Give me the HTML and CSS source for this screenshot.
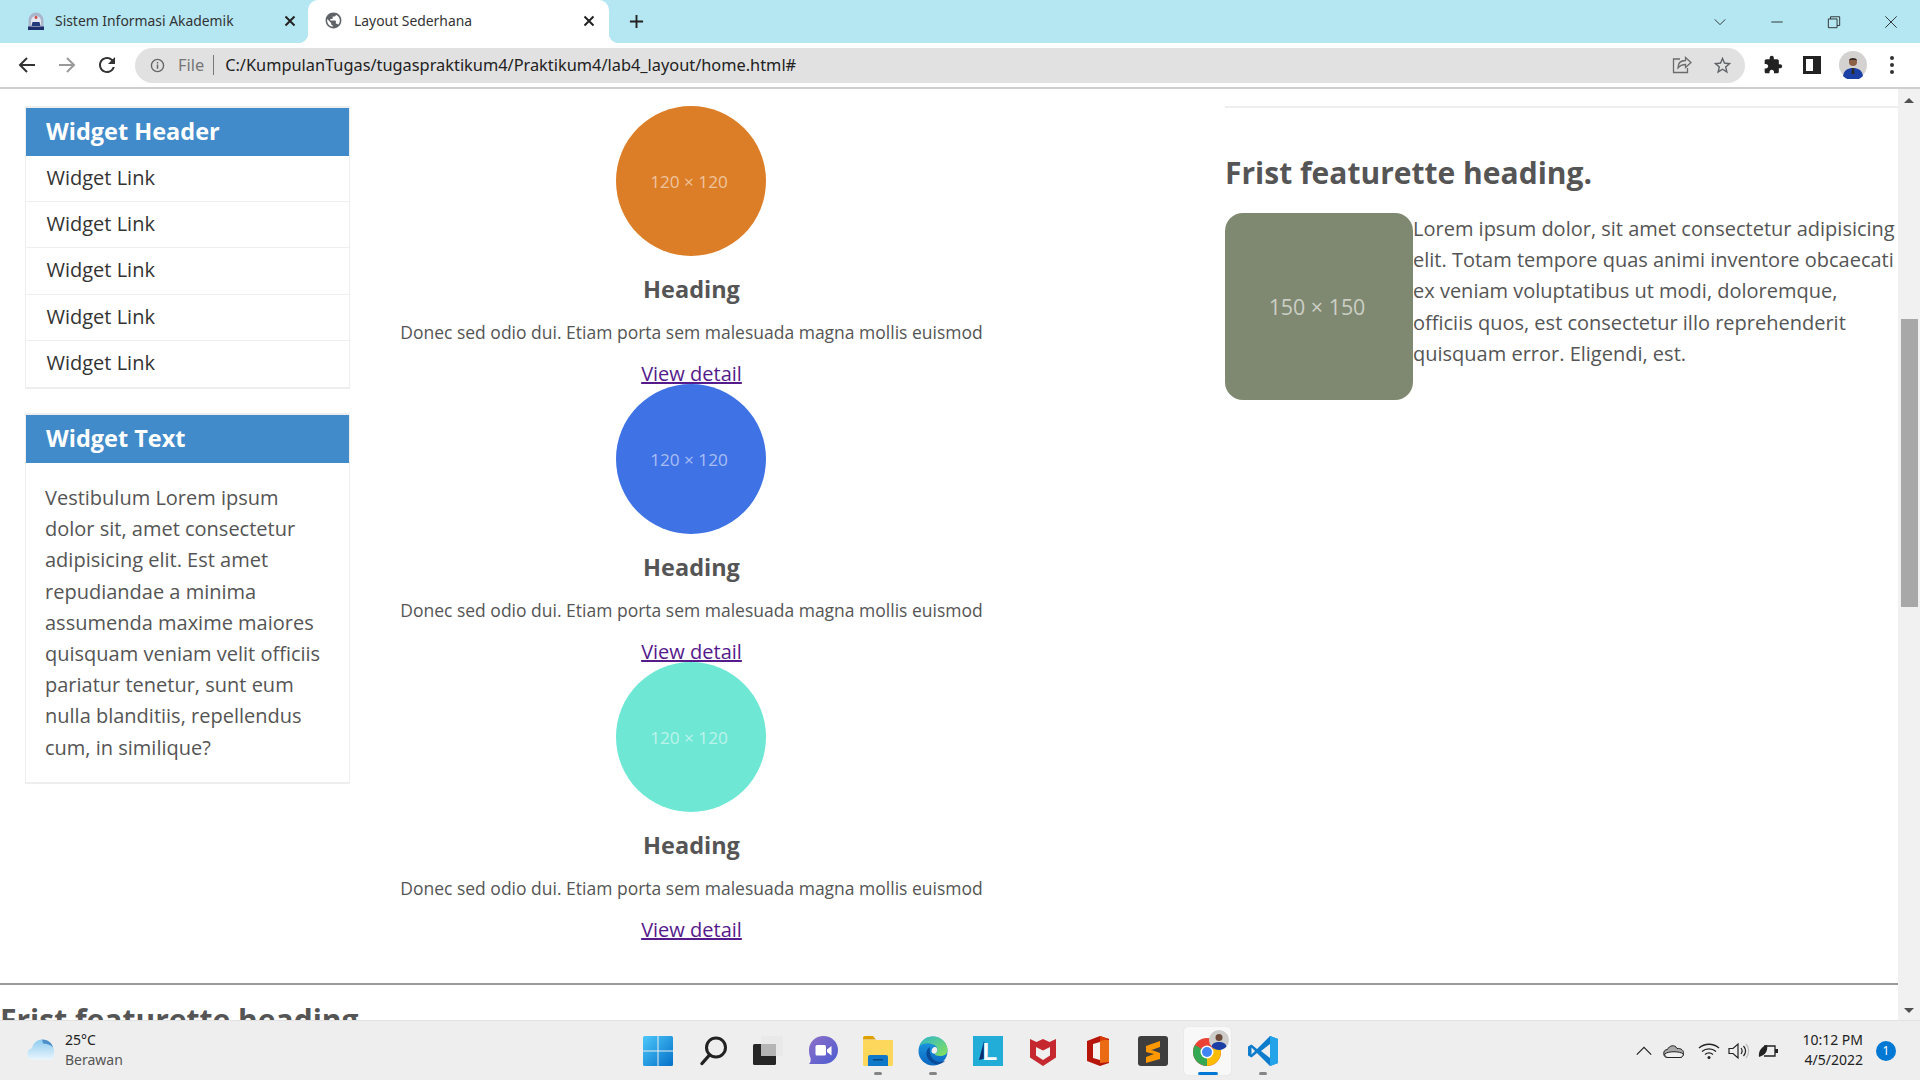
FILE: index.html
```html
<!DOCTYPE html>
<html lang="en">
<head>
  <meta charset="UTF-8">
  <title>Layout Sederhana</title>
  <link rel="stylesheet" href="styles.css">
</head>
<body>
  <!-- browser tabs -->
  <div class="tabstrip">
    <div class="tab">
      <svg class="favicon" viewBox="0 0 20 20"><path d="M2.500 17V9a7.500 7.500 0 0 1 15 0v8z" fill="#a9b6cc"/><path d="M5 17V10a5 5 0 0 1 10 0v7z" fill="#e3e7ef"/><circle cx="10" cy="6.500" r="1.400" fill="#c8483f"/><path d="M6.500 11h7l1 4h-9z" fill="#24397a"/><path d="M2 15.500h16V19H2z" fill="#1c2f6b"/></svg>
      <span class="tab-title">Sistem Informasi Akademik</span>
      <svg class="tab-close" viewBox="0 0 12 12"><path d="M1.500 1.500l9 9M10.500 1.500l-9 9"/></svg>
    </div>
    <div class="tab tab-active">
      <svg class="favicon" viewBox="0 0 24 24"><path fill="#5f6368" d="M12 2C6.480 2 2 6.480 2 12s4.480 10 10 10 10-4.480 10-10S17.520 2 12 2zm-1 17.930c-3.950-.49-7-3.850-7-7.930 0-.62.08-1.210.21-1.790L9 15v1c0 1.100.9 2 2 2v1.930zm6.900-2.540c-.26-.81-1-1.390-1.900-1.390h-1v-3c0-.55-.45-1-1-1H8v-2h2c.55 0 1-.45 1-1V7h2c1.100 0 2-.9 2-2v-.41c2.930 1.190 5 4.060 5 7.410 0 2.080-.8 3.970-2.100 5.390z"/></svg>
      <span class="tab-title">Layout Sederhana</span>
      <svg class="tab-close" viewBox="0 0 12 12"><path d="M1.500 1.500l9 9M10.500 1.500l-9 9"/></svg>
    </div>
    <svg class="new-tab" viewBox="0 0 16 16"><path d="M8 1v14M1 8h14"/></svg>
    <div class="window-controls">
      <svg class="win-btn" viewBox="0 0 16 16"><path d="M2 5l6 6 6-6"/></svg>
      <svg class="win-btn" viewBox="0 0 16 16"><path d="M1.500 8h13"/></svg>
      <svg class="win-btn" viewBox="0 0 16 16"><path d="M1.500 4.500h10v10h-10zM4 4.500V2h10.500v10h-3"/></svg>
      <svg class="win-btn" viewBox="0 0 16 16"><path d="M1.500 1.500l13 13M14.500 1.500l-13 13"/></svg>
    </div>
  </div>

  <!-- toolbar -->
  <div class="toolbar">
    <svg class="nav-icon" viewBox="0 0 24 24"><path d="M20 12H5M12 5l-7 7 7 7" fill="none" stroke="#333" stroke-width="2"/></svg>
    <svg class="nav-icon" viewBox="0 0 24 24"><path d="M4 12h15M12 5l7 7-7 7" fill="none" stroke="#9a9a9a" stroke-width="2"/></svg>
    <svg class="nav-icon" viewBox="0 0 24 24"><path fill="#333" d="M17.650 6.350A7.958 7.958 0 0 0 12 4c-4.420 0-7.990 3.580-7.990 8s3.570 8 7.990 8c3.730 0 6.840-2.550 7.730-6h-2.080A5.990 5.990 0 0 1 12 18c-3.310 0-6-2.690-6-6s2.690-6 6-6c1.660 0 3.140.69 4.220 1.780L13 11h7V4l-2.350 2.350z"/></svg>
    <div class="omnibox">
      <svg class="info-icon" viewBox="0 0 16 16"><circle cx="8" cy="8" r="6.500" fill="none" stroke="#666" stroke-width="1.500"/><path d="M8 7v4.500M8 4.200v1.600" stroke="#666" stroke-width="1.600"/></svg>
      <span class="scheme">File</span>
      <span class="omni-sep"></span>
      <span class="url">C:/KumpulanTugas/tugaspraktikum4/Praktikum4/lab4_layout/home.html#</span>
      <svg class="omni-icon" viewBox="0 0 20 20"><path d="M8 4H1.500v13.500h14V13M6 13c0-5 3-7.500 7.500-7.500V2.500L19 7.500l-5.500 5V9.500C10 9.500 8 10.500 6 13z" fill="none" stroke="#6b6b6b" stroke-width="1.300"/></svg>
      <svg class="omni-icon star" viewBox="0 0 24 24"><path fill="#5f6368" d="M22 9.240l-7.190-.62L12 2 9.190 8.630 2 9.240l5.460 4.730L5.820 21 12 17.270 18.180 21l-1.630-7.030L22 9.240zM12 15.400l-3.760 2.270 1-4.280-3.320-2.880 4.380-.38L12 6.100l1.710 4.040 4.380.38-3.320 2.880 1 4.280L12 15.400z"/></svg>
    </div>
    <svg class="tool-icon puzzle" viewBox="0 0 24 24"><path fill="#222" d="M20.500 11H19V7c0-1.100-.9-2-2-2h-4V3.500C13 2.120 11.880 1 10.500 1S8 2.120 8 3.500V5H4c-1.100 0-1.990.9-1.990 2v3.800H3.500c1.490 0 2.700 1.210 2.700 2.700s-1.210 2.700-2.700 2.700H2V20c0 1.100.9 2 2 2h3.800v-1.500c0-1.490 1.210-2.700 2.700-2.700 1.490 0 2.700 1.210 2.700 2.700V22H17c1.100 0 2-.9 2-2v-4h1.500c1.380 0 2.500-1.120 2.500-2.500S21.880 11 20.500 11z"/></svg>
    <span class="side-panel"><span></span></span>
    <svg class="avatar" viewBox="0 0 28 28"><circle cx="14" cy="14" r="14" fill="#d4d2d0"/><path d="M4 25c1-6 5-8 10-8s9 2 10 8a14 14 0 0 1-20 0z" fill="#1b3fa5"/><path d="M13 17h2l.6 6h-3.200z" fill="#2b2b2b"/><circle cx="14" cy="11" r="4" fill="#8d6048"/><path d="M10 9.500c0-3 8-3 8 0-2-1-6-1-8 0z" fill="#222"/></svg>
    <svg class="tool-icon dots" viewBox="0 0 6 20"><circle cx="3" cy="3" r="2" fill="#333"/><circle cx="3" cy="10" r="2" fill="#333"/><circle cx="3" cy="17" r="2" fill="#333"/></svg>
  </div>

  <!-- page in the browser viewport, scrolled down a bit -->
  <div class="viewport">
    <div class="page">
      <div class="columns">
        <aside class="sidebar">
          <div class="widget">
            <h3 class="widget-head">Widget Header</h3>
            <ul class="widget-links">
              <li>Widget Link</li>
              <li>Widget Link</li>
              <li>Widget Link</li>
              <li>Widget Link</li>
              <li>Widget Link</li>
            </ul>
          </div>
          <div class="widget">
            <h3 class="widget-head">Widget Text</h3>
            <p class="widget-text">Vestibulum Lorem ipsum dolor sit, amet consectetur adipisicing elit. Est amet repudiandae a minima assumenda maxime maiores quisquam veniam velit officiis pariatur tenetur, sunt eum nulla blanditiis, repellendus cum, in similique?</p>
          </div>
        </aside>

        <section class="center">
          <div class="item">
            <div class="circle orange">120 × 120</div>
            <h3>Heading</h3>
            <p>Donec sed odio dui. Etiam porta sem malesuada magna mollis euismod</p>
            <a href="#">View detail</a>
          </div>
          <div class="item">
            <div class="circle blue">120 × 120</div>
            <h3>Heading</h3>
            <p>Donec sed odio dui. Etiam porta sem malesuada magna mollis euismod</p>
            <a href="#">View detail</a>
          </div>
          <div class="item">
            <div class="circle teal">120 × 120</div>
            <h3>Heading</h3>
            <p>Donec sed odio dui. Etiam porta sem malesuada magna mollis euismod</p>
            <a href="#">View detail</a>
          </div>
        </section>

        <section class="featurette">
          <hr class="soft-rule">
          <h2>Frist featurette heading.</h2>
          <div class="thumb">150 × 150</div>
          <p>Lorem ipsum dolor, sit amet consectetur adipisicing elit. Totam tempore quas animi inventore obcaecati ex veniam voluptatibus ut modi, doloremque, officiis quos, est consectetur illo reprehenderit quisquam error. Eligendi, est.</p>
        </section>
      </div>
      <hr class="page-rule">
      <h2 class="next-heading">Frist featurette heading.</h2>
    </div>
    <div class="scrollbar">
      <span class="arrow-up"></span>
      <span class="thumb-bar"></span>
      <span class="arrow-down"></span>
    </div>
  </div>

  <!-- windows taskbar -->
  <div class="taskbar">
    <div class="weather">
      <svg class="weather-icon" viewBox="0 0 30 24"><defs><linearGradient id="cl" x1="0" y1="0" x2="0" y2="1"><stop offset="0" stop-color="#8ecbf0"/><stop offset="1" stop-color="#eaf6fd"/></linearGradient></defs><path d="M7 22a6 6 0 0 1-1-11.800C7 5 11 1.500 16 1.500c5.500 0 10 3 11 8 2 1.500 1.500 12.500-3 12.500z" fill="url(#cl)"/><path d="M16 1.500c5.500 0 10 3 11 8-3-3-6-4-10-4z" fill="#4f8fc8"/></svg>
      <div class="weather-text"><span>25°C</span><span class="weather-sub">Berawan</span></div>
    </div>
    <div class="task-icons">
      <div class="task-icon">
        <svg viewBox="0 0 30 30"><defs><linearGradient id="win" x1="0" y1="0" x2="1" y2="1"><stop offset="0" stop-color="#4cc8fa"/><stop offset="1" stop-color="#0570c9"/></linearGradient></defs><path fill="url(#win)" d="M0 1.500a1.500 1.500 0 0 1 1.500-1.500H14.500v14.500H0zM15.500 0h13A1.500 1.500 0 0 1 30 1.500v13H15.500zM0 15.500h14.500V30H1.500A1.500 1.500 0 0 1 0 28.500zM15.500 15.500H30v13a1.500 1.500 0 0 1-1.500 1.500h-13z"/></svg>
      </div>
      <div class="task-icon">
        <svg viewBox="0 0 30 30"><circle cx="18" cy="11.500" r="9.500" fill="none" stroke="#222" stroke-width="3"/><path d="M11.500 19L4 27.500" stroke="#222" stroke-width="3.400" stroke-linecap="round"/></svg>
      </div>
      <div class="task-icon">
        <svg viewBox="0 0 30 30"><rect x="0" y="8" width="23" height="21" rx="1.500" fill="#262626"/><rect x="8" y="0" width="22" height="20" rx="1" fill="#e9e9e9"/><rect x="8" y="8" width="15" height="12" fill="#b5b5b5"/></svg>
      </div>
      <div class="task-icon">
        <svg viewBox="0 0 30 30"><defs><linearGradient id="chat" x1="0" y1="0" x2="1" y2="1"><stop offset="0" stop-color="#8f6fc9"/><stop offset="1" stop-color="#4b5cd0"/></linearGradient></defs><path d="M15.500 0C23.500 0 30 6 30 14s-6.500 14-14.500 14H1c1.500-1.500 2-3.500 1.500-6C1.500 20 1 17 1 14 1 6 7.500 0 15.500 0z" fill="url(#chat)"/><rect x="7.500" y="9" width="10.500" height="10.500" rx="1.500" fill="#fff"/><path d="M19 13.500l4.500-3.500v9.500L19 16z" fill="#fff"/></svg>
      </div>
      <div class="task-icon has-dot">
        <svg viewBox="0 0 30 30"><path d="M0 2a2 2 0 0 1 2-2h8l3 3.500H0z" fill="#e0a000"/><path d="M0 4h30v24.500a1.500 1.500 0 0 1-1.500 1.500h-27A1.500 1.500 0 0 1 0 28.500z" fill="#fcd75c"/><path d="M5 21a2 2 0 0 1 2-2h16a2 2 0 0 1 2 2v9H5z" fill="#0f78c9"/><rect x="10" y="23" width="10" height="1.500" fill="#04487f"/></svg>
      </div>
      <div class="task-icon has-dot">
        <svg viewBox="0 0 30 30"><defs><linearGradient id="edg" x1="0" y1="0" x2="1" y2="1"><stop offset="0" stop-color="#2fb6c8"/><stop offset="1" stop-color="#86e25a"/></linearGradient><linearGradient id="edb" x1="0" y1="0" x2="0" y2="1"><stop offset="0" stop-color="#1fa0e6"/><stop offset="1" stop-color="#0b66c0"/></linearGradient></defs><circle cx="15" cy="15" r="14.500" fill="url(#edb)"/><path d="M1.500 10C3.500 3.500 9 .5 15 .5c8.500 0 14.500 6.500 14.500 13.500 0 4.500-3.500 6-7.500 6-3 0-5-1-5.500-2 3-1 4-4 2-7C15 6.500 6 6 1.500 10z" fill="url(#edg)"/><path d="M12 11c-4.500 2.500-5 9.500 0 14 3.500 3.500 10 5 15.500-.5-5 2.500-9.500 1.500-12-1-3.500-3.500-4.500-8-3.500-12.500z" fill="#0a4a96"/><path d="M13.500 15.500c0-3 2-5 4-4.500 2.500 1 2.500 4.500 0 6.500-2 .5-4-.5-4-2z" fill="#f0f0f0"/></svg>
      </div>
      <div class="task-icon">
        <svg viewBox="0 0 30 30"><rect width="30" height="30" fill="#22acd8"/><path d="M11 5L6 24l9-2.500z" fill="#0b2c6b"/><text x="9.500" y="24" class="l-mark">L</text></svg>
      </div>
      <div class="task-icon">
        <svg viewBox="0 0 30 30"><path d="M2 3l6.500 3L15 3l6.500 3L28 3v18.500L15 30 2 21.500z" fill="#c5282e"/><path d="M8 11l7 3.500 7-3.500v8.500L15 24l-7-4.500z" fill="#f0f0f0"/></svg>
      </div>
      <div class="task-icon">
        <svg viewBox="0 0 30 30"><path d="M17 0L4 5v20l13 5 9-3V3z" fill="#b7150c"/><path d="M10 8l7-2v18l-7-2z" fill="#f7f2ef"/><path d="M17 3l9 1v22l-9 1z" fill="#eb6a14"/><path d="M17 0l9 3-9 2z" fill="#d83b01"/></svg>
      </div>
      <div class="task-icon">
        <svg viewBox="0 0 30 30"><rect width="30" height="30" rx="3" fill="#3e3e3e"/><path d="M22 5v6L8 16v-6zM8 12l14 5v6L8 27v-6l8-3-8-2z" fill="#ff9800"/></svg>
      </div>
      <div class="task-icon task-active">
        <svg viewBox="0 0 44 44"><circle cx="21" cy="23" r="14" fill="#ea4335"/><path d="M21 23l12.100-7A14 14 0 0 1 21 37z" fill="#fbbc05"/><path d="M21 23v14A14 14 0 0 1 8.900 16z" fill="#34a853"/><circle cx="21" cy="23" r="6.500" fill="#fff"/><circle cx="21" cy="23" r="5" fill="#4285f4"/><circle cx="33" cy="11" r="10" fill="#cfcdcb"/><path d="M25.500 17.500c1-3.500 4-4.500 7.500-4.500s6.500 1 7.500 4.500a10 10 0 0 1-15 0z" fill="#1b3fa5"/><circle cx="33" cy="8.500" r="3.500" fill="#6b4a3a"/></svg>
      </div>
      <div class="task-icon has-dot">
        <svg viewBox="0 0 30 30"><path d="M22 0L9 13 3.500 8.500 0 10.500v9L3.500 21.500 9 17l13 13 8-3V3z" fill="#0e7ccc"/><path d="M22 0l8 3v24l-8 3z" fill="#23a3ea"/><path d="M22 8l-9 7 9 7z" fill="#eee"/><path d="M3.500 11.500v7L7 15z" fill="#eee"/></svg>
      </div>
    </div>
    <div class="tray">
      <svg class="tray-icon" viewBox="0 0 20 20"><path d="M2 14l8-8 8 8" fill="none" stroke="#222" stroke-width="1.300"/></svg>
      <svg class="tray-icon" viewBox="0 0 22 16"><path d="M5 14.500a4 4 0 0 1-.5-8C6 2.500 12 1 14 5.500c4-.5 7 2 6.500 5 0 2-1.500 4-3.500 4z" fill="#a9a9a9" stroke="#222" stroke-width="1"/><path d="M1.500 11c4-3 15-3 19 0-.5 2-1.500 3.500-3.500 3.500H5C3 14.500 2 13 1.500 11z" fill="#f0f0f0" stroke="#222" stroke-width="1"/></svg>
      <svg class="tray-icon" viewBox="0 0 22 18"><path d="M1 6c5.500-5 14.500-5 20 0M4 9.500c4-3.500 10-3.500 14 0M7 12.500c2.500-2 5.500-2 8 0" fill="none" stroke="#222" stroke-width="1.300"/><circle cx="11" cy="15.500" r="1.500" fill="#222"/></svg>
      <svg class="tray-icon" viewBox="0 0 22 18"><path d="M1 6.500h4L10 2v14l-5-4.500H1z" fill="none" stroke="#222" stroke-width="1.200"/><path d="M13 6c1.500 2 1.500 4 0 6M15.500 4c2.500 3 2.500 7 0 10" fill="none" stroke="#222" stroke-width="1.200"/><path d="M18 2c3.500 4 3.500 10 0 14" fill="none" stroke="#bbb" stroke-width="1.200"/></svg>
      <svg class="tray-icon" viewBox="0 0 22 18"><path d="M6 4h11v10H6" fill="none" stroke="#222" stroke-width="1.300"/><path d="M17 7h3v4h-3" fill="#222"/><path d="M1 15C0 9 4 4 9 3c1 5-1 10-8 12z" fill="#222"/></svg>
      <div class="clock"><span>10:12 PM</span><span>4/5/2022</span></div>
      <span class="notif">1</span>
    </div>
  </div>
</body>
</html>
```

FILE: styles.css
```css
* {
  box-sizing: border-box;
}
html, body {
  margin: 0;
  height: 100%;
  overflow: hidden;
}
body {
  display: flex;
  flex-direction: column;
  font-family: "Open Sans", sans-serif;
  color: #555;
  background: #fff;
}

/* tab strip */
.tabstrip {
  height: 43px;
  flex: none;
  display: flex;
  align-items: stretch;
  background: #b5e7f3;
  font-family: "Noto Sans", sans-serif;
  font-size: 13.900px;
  color: #333;
}
.tab {
  width: 308px;
  display: flex;
  align-items: center;
  padding: 0 12px 2px 26px;
}
.tab-active {
  position: relative;
  width: 301px;
  padding: 0 14px 2px 16px;
  background: #fff;
  border-radius: 10px 10px 0 0;
}
.tab-active::before, .tab-active::after {
  content: "";
  position: absolute;
  bottom: 0;
  width: 10px;
  height: 10px;
}
.tab-active::before {
  left: -10px;
  background: radial-gradient(circle at 0 0, transparent 10px, #fff 10.500px);
}
.tab-active::after {
  right: -10px;
  background: radial-gradient(circle at 100% 0, transparent 10px, #fff 10.500px);
}
.favicon {
  width: 20px;
  height: 20px;
  flex: none;
  margin-right: 9px;
}
.tab-active .favicon {
  width: 19px;
  height: 19px;
  margin-right: 11px;
}
.tab-title {
  flex: 1;
  white-space: nowrap;
}
.tab-close {
  width: 12px;
  height: 12px;
  flex: none;
  fill: none;
  stroke: #222;
  stroke-width: 2;
}
.new-tab {
  width: 15px;
  height: 15px;
  margin: 14px 0 0 20px;
  fill: none;
  stroke: #222;
  stroke-width: 2;
}
.window-controls {
  margin-left: auto;
  display: flex;
  align-items: center;
  gap: 43px;
  padding-right: 22px;
}
.win-btn {
  width: 14px;
  height: 14px;
  fill: none;
  stroke: #222;
  stroke-width: 1;
}

/* toolbar */
.toolbar {
  height: 46px;
  flex: none;
  display: flex;
  align-items: center;
  background: #fff;
  border-bottom: 2px solid #cfcfcf;
  padding-left: 15px;
}
.nav-icon {
  width: 24px;
  height: 24px;
  margin-right: 16px;
}
.omnibox {
  width: 1610px;
  height: 35px;
  display: flex;
  align-items: center;
  padding: 0 12px 0 15px;
  border-radius: 18px;
  background: #e1e1e1;
  font-family: "Noto Sans", sans-serif;
  font-size: 16.350px;
}
.info-icon {
  width: 15px;
  height: 15px;
  margin-right: 13px;
}
.scheme {
  color: #767676;
}
.omni-sep {
  width: 1px;
  height: 20px;
  margin: 0 11px 0 9px;
  background: #777;
}
.url {
  flex: 1;
  color: #222;
  white-space: nowrap;
}
.omni-icon {
  width: 20px;
  height: 20px;
  margin-right: 20px;
}
.omni-icon.star {
  width: 21px;
  height: 21px;
  margin-right: 0;
}
.tool-icon {
  flex: none;
}
.puzzle {
  width: 20px;
  height: 20px;
  margin-left: 18px;
}
.side-panel {
  width: 18px;
  height: 18px;
  margin-left: 20px;
  display: flex;
  background: #222;
  padding: 3px 8px 3px 3px;
}
.side-panel span {
  flex: 1;
  background: #fff;
}
.avatar {
  width: 28px;
  height: 28px;
  margin-left: 18px;
}
.dots {
  width: 6px;
  height: 20px;
  margin-left: 22px;
}

/* viewport */
.viewport {
  flex: 1;
  min-height: 0;
  display: flex;
  background: #fff;
}
.page {
  flex: 1;
  min-width: 0;
  overflow: hidden;
}
.columns {
  display: flex;
  align-items: flex-start;
  padding: 17px 0 0 25px;
}
.sidebar {
  width: 325px;
  flex: none;
}
.widget {
  border: 1px solid #eee;
  border-width: 2px 1px;
  margin-bottom: 24px;
}
.widget-head {
  margin: 0;
  height: 48px;
  padding-left: 20px;
  background: #428bca;
  color: #fff;
  font-size: 23.500px;
  font-weight: 700;
  line-height: 46px;
}
.widget-links {
  list-style: none;
  margin: 0;
  padding: 0;
}
.widget-links li {
  height: 46.200px;
  padding-left: 20.500px;
  border-bottom: 1px solid #eee;
  color: #333;
  font-size: 20px;
  line-height: 43px;
}
.widget-links li:last-child {
  border-bottom: 0;
}
.widget-text {
  margin: 0;
  padding: 19px 25px 19px 19px;
  font-size: 20px;
  line-height: 31.200px;
}

.center {
  width: 683px;
  flex: none;
}
.item {
  height: 278px;
  display: flex;
  flex-direction: column;
  align-items: center;
}
.circle {
  width: 150px;
  height: 150px;
  flex: none;
  margin-right: 2px;
  display: flex;
  align-items: center;
  justify-content: center;
  padding-right: 3px;
  border-radius: 50%;
  color: rgba(255, 255, 255, 0.55);
  font-size: 17.200px;
}
.orange {
  background: #dc7e27;
}
.blue {
  background: #3f72e5;
}
.teal {
  background: #6ee7d5;
}
.item h3 {
  margin: 15px 0 0;
  font-size: 23.500px;
  font-weight: 700;
  line-height: 36px;
}
.item p {
  margin: 12px 0 0;
  font-size: 17.500px;
  line-height: 27px;
}
.item a {
  margin-top: 13.500px;
  color: #551a8b;
  font-size: 20px;
  line-height: 27px;
}

.featurette {
  flex: 1;
  min-width: 0;
  margin-left: 192px;
}
.soft-rule {
  margin: 0;
  border: 0;
  border-top: 2px solid #eee;
}
.featurette h2 {
  margin: 43px 0 0;
  font-size: 30px;
  font-weight: 700;
  line-height: 44px;
}
.thumb {
  float: left;
  width: 188px;
  height: 187px;
  margin-top: 18px;
  display: flex;
  align-items: center;
  justify-content: center;
  padding-right: 4px;
  border-radius: 18px;
  background: #7f8870;
  color: rgba(255, 255, 255, 0.6);
  font-size: 21.400px;
}
.featurette p {
  margin: 18px 0 0;
  font-size: 20px;
  line-height: 31.200px;
}
.page-rule {
  margin: 43px 0 0;
  border: 0;
  border-top: 2px solid #999;
}
.next-heading {
  margin: 13px 0 0;
  font-size: 30px;
  font-weight: 700;
  line-height: 44px;
}

/* scrollbar */
.scrollbar {
  width: 22px;
  flex: none;
  display: flex;
  flex-direction: column;
  align-items: center;
  background: #f1f1f1;
  padding-top: 9px;
}
.arrow-up {
  border: 5px solid transparent;
  border-top: 0;
  border-bottom: 5px solid #505050;
}
.thumb-bar {
  width: 17px;
  height: 288px;
  margin-top: 216px;
  background: #a8a8a8;
}
.arrow-down {
  margin-top: auto;
  margin-bottom: 7px;
  border: 5px solid transparent;
  border-bottom: 0;
  border-top: 5px solid #505050;
}

/* taskbar */
.taskbar {
  height: 60px;
  flex: none;
  display: grid;
  grid-template-columns: 1fr auto 1fr;
  align-items: center;
  background: #eeeeee;
  border-top: 1px solid #e2e2e2;
  font-family: "Noto Sans", sans-serif;
  color: #222;
}
.weather {
  display: flex;
  align-items: center;
  padding: 0 0 2px 26px;
  font-size: 14px;
}
.weather-icon {
  width: 30px;
  height: 24px;
  margin-right: 9px;
}
.weather-text {
  display: flex;
  flex-direction: column;
  line-height: 20px;
}
.weather-sub {
  color: #555;
}
.task-icons {
  display: flex;
  gap: 8px;
}
.task-icon {
  position: relative;
  width: 47px;
  height: 48px;
  display: flex;
  align-items: center;
  justify-content: center;
}
.task-icon svg {
  width: 30px;
  height: 30px;
}
.l-mark {
  fill: #fff;
  font-family: "Liberation Sans", sans-serif;
  font-size: 24px;
  font-weight: 700;
}
.has-dot::after, .task-active::after {
  content: "";
  position: absolute;
  left: 50%;
  bottom: 0;
  width: 8px;
  height: 3px;
  margin-left: -4px;
  border-radius: 2px;
  background: #858585;
}
.task-active {
  background: #f8f8f8;
  border-radius: 4px;
  box-shadow: 0 0 1px #ccc;
}
.task-active svg {
  width: 44px;
  height: 44px;
}
.task-active::after {
  width: 20px;
  margin-left: -10px;
  background: #0078d4;
}
.tray {
  display: flex;
  align-items: center;
  justify-content: flex-end;
  padding-right: 24px;
}
.tray-icon {
  width: 22px;
  height: 18px;
  margin-right: 8px;
}
.tray-icon:nth-of-type(2) {
  margin-right: 13px;
}
.tray-icon:nth-of-type(5) {
  margin-right: 0;
}
.clock {
  display: flex;
  flex-direction: column;
  align-items: flex-end;
  margin-left: 22px;
  padding-bottom: 2px;
  font-size: 14px;
  line-height: 20px;
}
.notif {
  width: 20px;
  height: 20px;
  margin-left: 13px;
  border-radius: 50%;
  background: #0078d4;
  color: #fff;
  font-size: 12px;
  line-height: 20px;
  text-align: center;
}
```
